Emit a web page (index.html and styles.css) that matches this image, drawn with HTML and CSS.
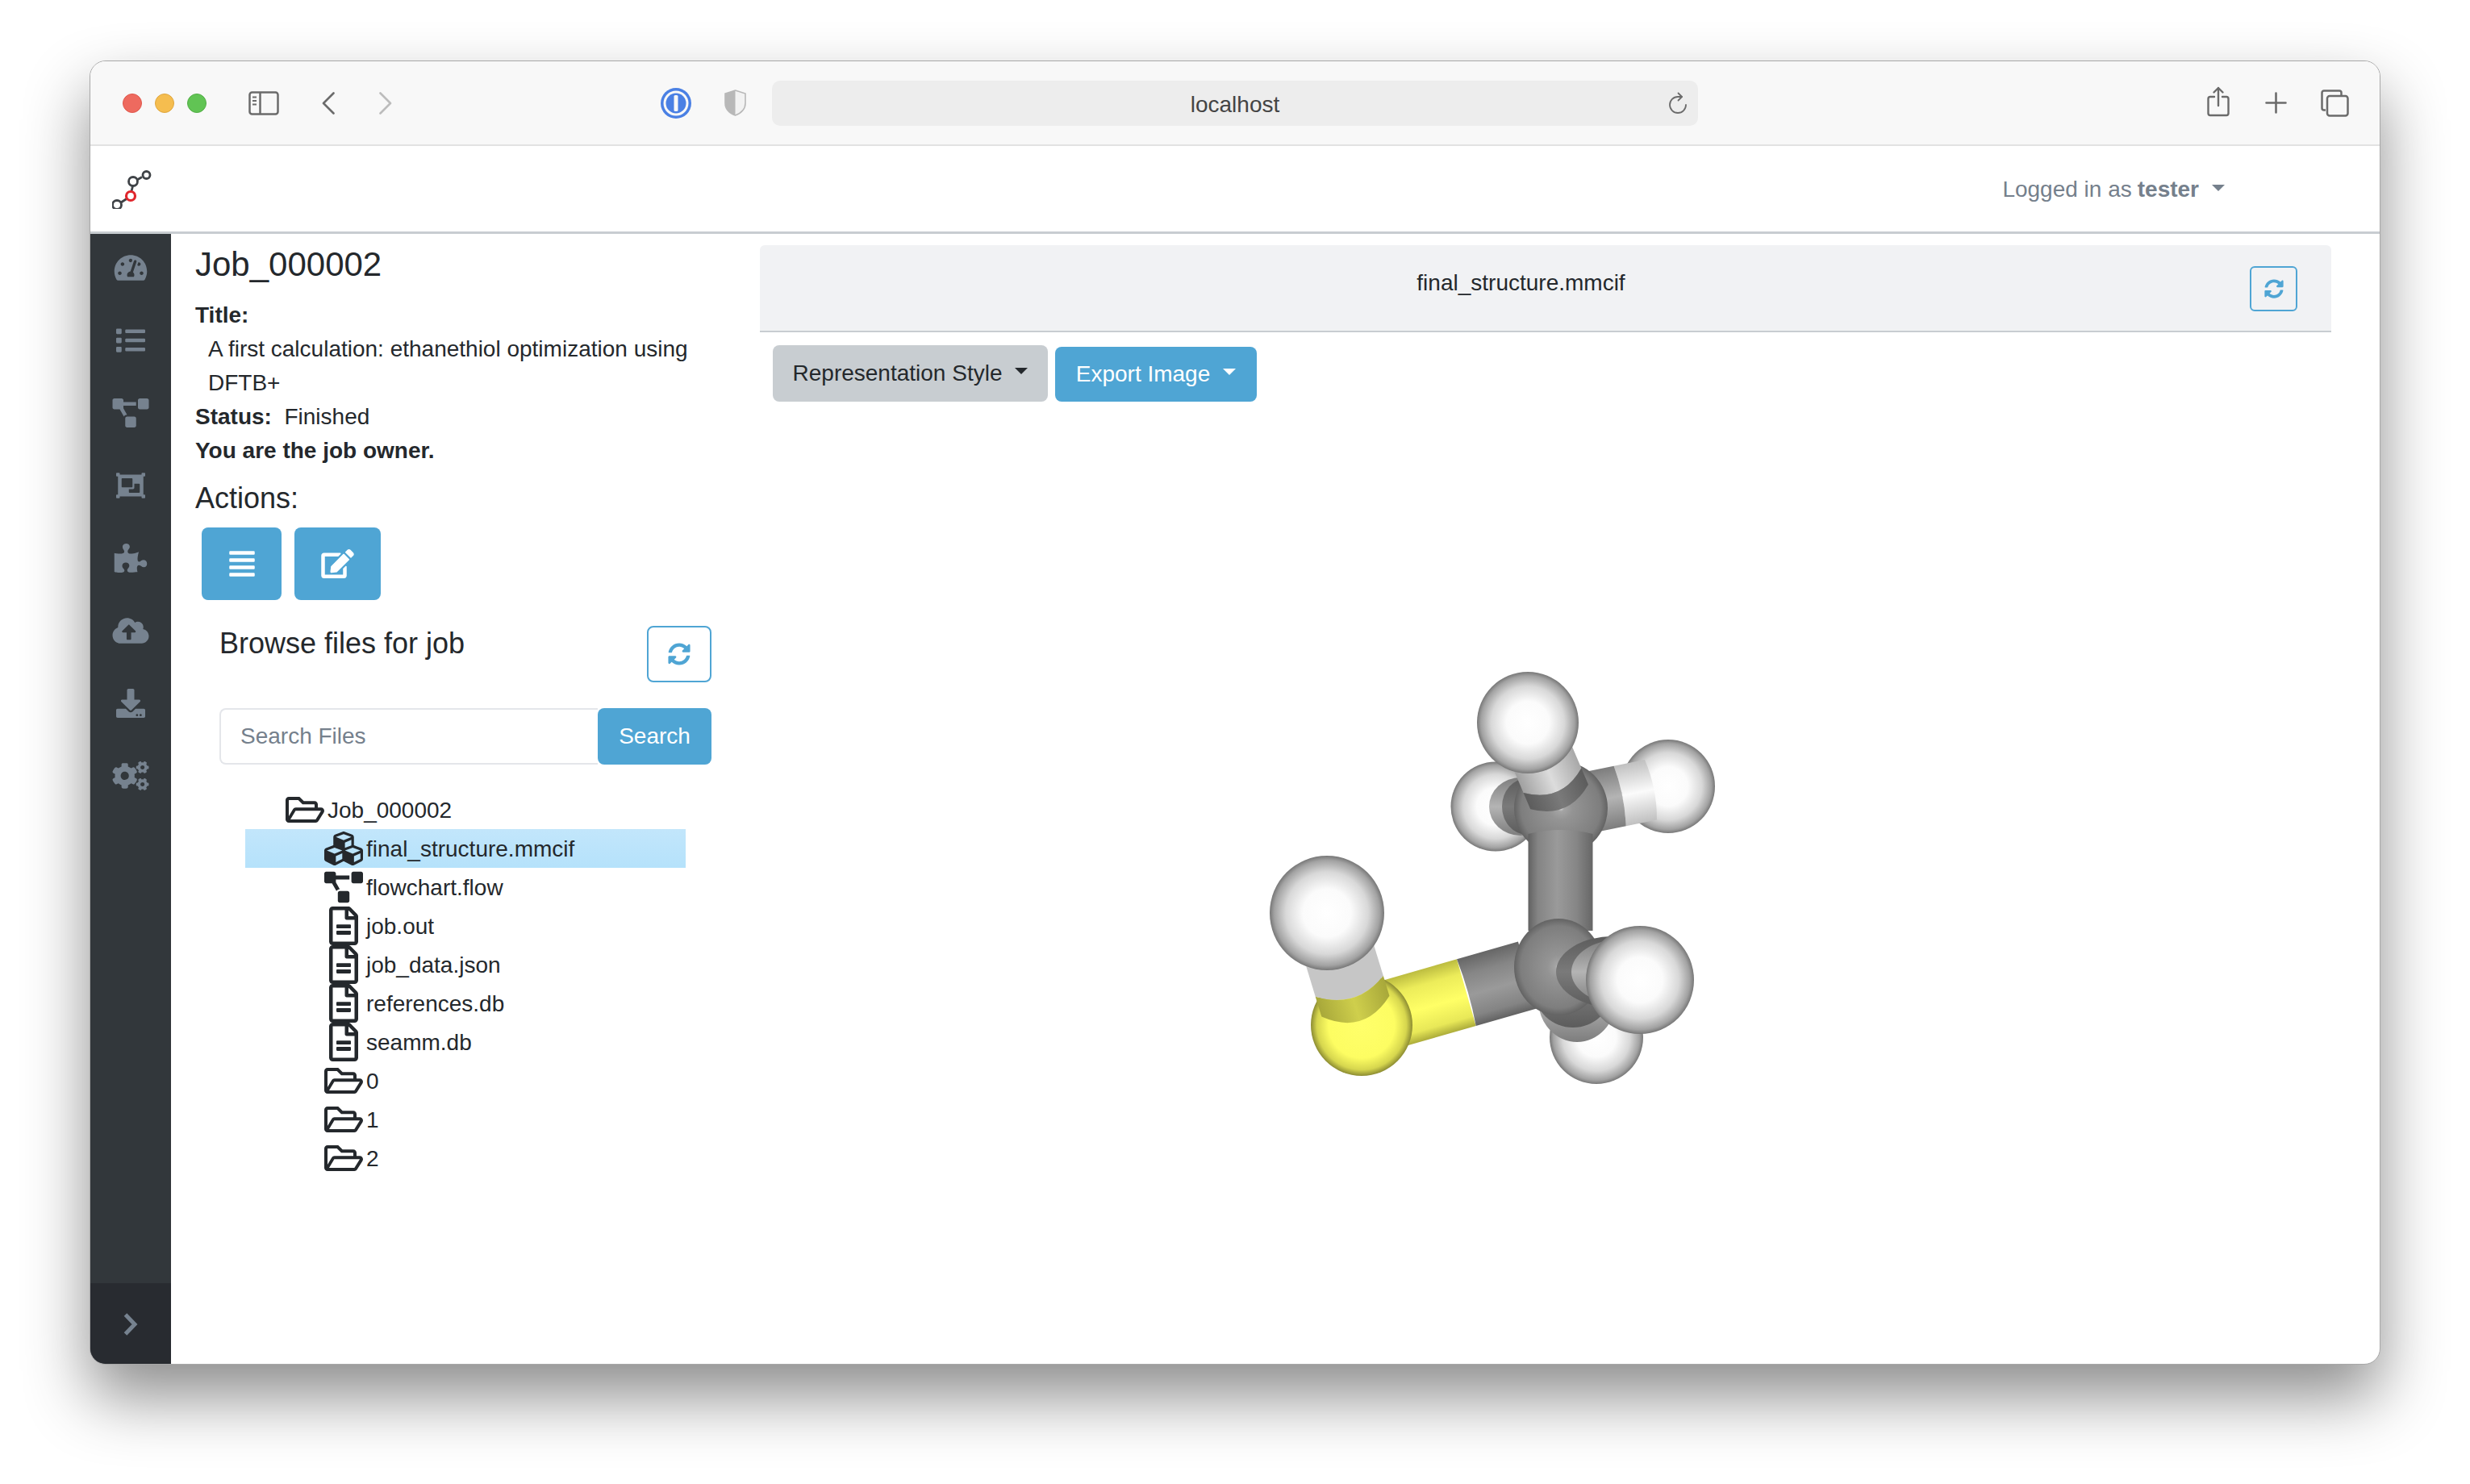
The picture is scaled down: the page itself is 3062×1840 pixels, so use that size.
FILE: index.html
```html
<!DOCTYPE html>
<html>
<head>
  <title>Job_000002</title>
  <link rel="stylesheet" href="styles.css">
</head>
<body>
  <svg class="icon-defs" xmlns="http://www.w3.org/2000/svg">
    <symbol id="i-gauge" viewBox="0 0 576 512"><path d="M288 32C128.94 32 0 160.94 0 320c0 52.8 14.25 102.26 39.06 144.8 5.61 9.62 16.3 15.2 27.44 15.2h443c11.14 0 21.83-5.58 27.44-15.2C561.75 422.26 576 372.8 576 320c0-159.06-128.94-288-288-288zm0 64c14.71 0 26.58 10.13 30.32 23.65-1.11 2.26-2.64 4.23-3.45 6.67l-9.22 27.67c-5.13 3.49-10.97 6.01-17.64 6.01-17.67 0-32-14.33-32-32S270.33 96 288 96zM96 384c-17.67 0-32-14.33-32-32s14.33-32 32-32 32 14.33 32 32-14.33 32-32 32zm48-160c-17.67 0-32-14.33-32-32s14.33-32 32-32 32 14.33 32 32-14.33 32-32 32zm246.77-72.41l-61.33 184C343.13 347.33 352 364.54 352 384c0 11.72-3.38 22.55-8.88 32H232.88c-5.5-9.45-8.88-20.28-8.88-32 0-33.94 26.5-61.43 59.9-63.59l61.34-184.01c4.17-12.56 17.73-19.45 30.36-15.17 12.57 4.19 19.35 17.79 15.17 30.36zm14.66 57.2l15.52-46.55c3.47-1.29 7.13-2.23 11.05-2.23 17.67 0 32 14.33 32 32s-14.33 32-32 32c-11.38-.01-20.89-6.28-26.57-15.22zM480 384c-17.67 0-32-14.33-32-32s14.33-32 32-32 32 14.33 32 32-14.33 32-32 32z"/></symbol>
    <symbol id="i-list" viewBox="0 0 512 512"><path d="M80 368H16a16 16 0 0 0-16 16v64a16 16 0 0 0 16 16h64a16 16 0 0 0 16-16v-64a16 16 0 0 0-16-16zm0-320H16A16 16 0 0 0 0 64v64a16 16 0 0 0 16 16h64a16 16 0 0 0 16-16V64a16 16 0 0 0-16-16zm0 160H16a16 16 0 0 0-16 16v64a16 16 0 0 0 16 16h64a16 16 0 0 0 16-16v-64a16 16 0 0 0-16-16zm416 176H176a16 16 0 0 0-16 16v32a16 16 0 0 0 16 16h320a16 16 0 0 0 16-16v-32a16 16 0 0 0-16-16zm0-320H176a16 16 0 0 0-16 16v32a16 16 0 0 0 16 16h320a16 16 0 0 0 16-16V80a16 16 0 0 0-16-16zm0 160H176a16 16 0 0 0-16 16v32a16 16 0 0 0 16 16h320a16 16 0 0 0 16-16v-32a16 16 0 0 0-16-16z"/></symbol>
    <symbol id="i-flow" viewBox="0 0 640 512"><path d="M384 320H256c-17.67 0-32 14.33-32 32v128c0 17.67 14.33 32 32 32h128c17.67 0 32-14.33 32-32V352c0-17.67-14.33-32-32-32zM192 32c0-17.67-14.33-32-32-32H32C14.33 0 0 14.33 0 32v128c0 17.67 14.33 32 32 32h95.72l73.16 128.04C211.98 300.98 232.4 288 256 288h.28L192 175.51V128h224V64H192V32zM608 0H480c-17.67 0-32 14.33-32 32v128c0 17.67 14.33 32 32 32h128c17.67 0 32-14.33 32-32V32c0-17.67-14.33-32-32-32z"/></symbol>
    <symbol id="i-group" viewBox="0 0 512 512"><path d="M480 128V96h20c6.627 0 12-5.373 12-12V44c0-6.627-5.373-12-12-12h-40c-6.627 0-12 5.373-12 12v20H64V44c0-6.627-5.373-12-12-12H12C5.373 32 0 37.373 0 44v40c0 6.627 5.373 12 12 12h20v320H12c-6.627 0-12 5.373-12 12v40c0 6.627 5.373 12 12 12h40c6.627 0 12-5.373 12-12v-20h384v20c0 6.627 5.373 12 12 12h40c6.627 0 12-5.373 12-12v-40c0-6.627-5.373-12-12-12h-20V128zM96 276V140c0-6.627 5.373-12 12-12h168c6.627 0 12 5.373 12 12v136c0 6.627-5.373 12-12 12H108c-6.627 0-12-5.373-12-12zm320 96c0 6.627-5.373 12-12 12H236c-6.627 0-12-5.373-12-12v-52h72c13.255 0 24-10.745 24-24v-72h84c6.627 0 12 5.373 12 12v136z"/></symbol>
    <symbol id="i-puzzle" viewBox="0 0 576 512"><path d="M519.442 288.651c-41.519 0-59.5 31.593-82.058 31.593C377.409 320.244 432 144 432 144s-196.288 80-196.288-3.297c0-35.827 36.288-46.25 36.288-85.985C272 19.216 243.885 0 210.539 0c-34.654 0-66.366 18.891-66.366 56.346 0 41.364 31.711 59.277 31.711 81.75C175.885 207.719 0 166.758 0 166.758v333.237s178.635 41.047 178.635-28.662c0-22.473-40-40.107-40-81.471 0-37.456 29.25-56.346 63.577-56.346 33.673 0 61.788 19.216 61.788 54.717 0 39.735-36.288 50.158-36.288 85.985 0 60.803 129.675 25.73 181.23 25.73 0 0-34.725-120.101 25.827-120.101 35.962 0 46.423 36.152 86.308 36.152C556.712 416 576 387.99 576 354.443c0-34.199-18.962-65.792-56.558-65.792z"/></symbol>
    <symbol id="i-cloud" viewBox="0 0 640 512"><path d="M537.6 226.6c4.1-10.7 6.4-22.4 6.4-34.6 0-53-43-96-96-96-19.7 0-38.1 6-53.3 16.2C367 64.2 315.3 32 256 32c-88.4 0-160 71.6-160 160 0 2.7.1 5.4.2 8.1C40.2 219.8 0 273.2 0 336c0 79.5 64.5 144 144 144h368c70.7 0 128-57.3 128-128 0-61.9-44-113.6-102.4-125.4zM393.4 288H328v112c0 8.8-7.2 16-16 16h-48c-8.8 0-16-7.2-16-16V288h-65.4c-14.3 0-21.4-17.2-11.3-27.3l105.4-105.4c6.2-6.2 16.4-6.2 22.6 0l105.4 105.4c10.1 10.1 3 27.3-11.3 27.3z"/></symbol>
    <symbol id="i-download" viewBox="0 0 512 512"><path d="M216 0h80c13.3 0 24 10.7 24 24v168h87.7c17.8 0 26.7 21.5 14.1 34.1L269.7 378.3c-7.5 7.5-19.8 7.5-27.3 0L90.1 226.1c-12.6-12.6-3.7-34.1 14.1-34.1H192V24c0-13.3 10.7-24 24-24zm296 376v112c0 13.3-10.7 24-24 24H24c-13.3 0-24-10.7-24-24V376c0-13.3 10.7-24 24-24h146.7l49 49c20.1 20.1 52.5 20.1 72.6 0l49-49H488c13.3 0 24 10.7 24 24zm-124 88c0-11-9-20-20-20s-20 9-20 20 9 20 20 20 20-9 20-20zm64 0c0-11-9-20-20-20s-20 9-20 20 9 20 20 20 20-9 20-20z"/></symbol>
    <symbol id="i-cogs" viewBox="0 0 640 512"><path d="M512.1 191l-8.2 14.3c-3 5.3-9.4 7.5-15.1 5.4-11.8-4.4-22.6-10.7-32.1-18.6-4.6-3.8-5.8-10.5-2.8-15.7l8.2-14.3c-6.9-8-12.3-17.3-15.9-27.4h-16.5c-6 0-11.2-4.3-12.2-10.3-2-12-2.1-24.6 0-37.1 1-6 6.2-10.4 12.2-10.4h16.5c3.6-10.1 9-19.4 15.9-27.4l-8.2-14.3c-3-5.2-1.9-11.9 2.8-15.7 9.5-7.9 20.4-14.2 32.1-18.6 5.7-2.1 12.1.1 15.1 5.4l8.2 14.3c10.5-1.9 21.2-1.9 31.7 0L552 6.3c3-5.3 9.4-7.5 15.1-5.4 11.8 4.4 22.6 10.7 32.1 18.6 4.6 3.8 5.8 10.5 2.8 15.7l-8.2 14.3c6.9 8 12.3 17.3 15.9 27.4h16.5c6 0 11.2 4.3 12.2 10.3 2 12 2.1 24.6 0 37.1-1 6-6.2 10.4-12.2 10.4h-16.5c-3.6 10.1-9 19.4-15.9 27.4l8.2 14.3c3 5.2 1.9 11.9-2.8 15.7-9.5 7.9-20.4 14.2-32.1 18.6-5.7 2.1-12.1-.1-15.1-5.4l-8.2-14.3c-10.4 1.9-21.2 1.9-31.7 0zm-10.5-58.8c38.5 29.6 82.4-14.3 52.8-52.8-38.5-29.7-82.4 14.3-52.8 52.8zM386.3 286.1l33.7 16.8c10.1 5.8 14.5 18.1 10.5 29.1-8.9 24.2-26.4 46.4-42.6 65.8-7.4 8.9-20.2 11.1-30.3 5.3l-29.1-16.8c-16 13.7-34.6 24.6-54.9 31.7v33.6c0 11.6-8.3 21.6-19.7 23.6-24.6 4.2-50.4 4.4-75.9 0-11.5-2-20-11.9-20-23.6V418c-20.3-7.2-38.9-18-54.9-31.7L74 403c-10 5.8-22.9 3.6-30.3-5.3-16.2-19.4-33.3-41.6-42.2-65.7-4-10.9.4-23.2 10.5-29.1l33.3-16.8c-3.9-20.9-3.9-42.4 0-63.4L12 205.8c-10.1-5.8-14.6-18.1-10.5-29 8.9-24.2 26-46.4 42.2-65.8 7.4-8.9 20.2-11.1 30.3-5.3l29.1 16.8c16-13.7 34.6-24.6 54.9-31.7V57.1c0-11.5 8.2-21.5 19.6-23.5 24.6-4.2 50.5-4.4 76-.1 11.5 2 20 11.9 20 23.6v33.6c20.3 7.2 38.9 18 54.9 31.7l29.1-16.8c10-5.8 22.9-3.6 30.3 5.3 16.2 19.4 33.2 41.6 42.1 65.8 4 10.9.1 23.2-10 29.1l-33.7 16.8c3.9 21 3.9 42.5 0 63.5zm-117.6 21.1c59.2-77-28.7-164.9-105.7-105.7-59.2 77 28.7 164.9 105.7 105.7zm243.4 182.7l-8.2 14.3c-3 5.3-9.4 7.5-15.1 5.4-11.8-4.4-22.6-10.7-32.1-18.6-4.6-3.8-5.8-10.5-2.8-15.7l8.2-14.3c-6.9-8-12.3-17.3-15.9-27.4h-16.5c-6 0-11.2-4.3-12.2-10.3-2-12-2.1-24.6 0-37.1 1-6 6.2-10.4 12.2-10.4h16.5c3.6-10.1 9-19.4 15.9-27.4l-8.2-14.3c-3-5.2-1.9-11.9 2.8-15.7 9.5-7.9 20.4-14.2 32.1-18.6 5.7-2.1 12.1.1 15.1 5.4l8.2 14.3c10.5-1.9 21.2-1.9 31.7 0l8.2-14.3c3-5.3 9.4-7.5 15.1-5.4 11.8 4.4 22.6 10.7 32.1 18.6 4.6 3.8 5.8 10.5 2.8 15.7l-8.2 14.3c6.9 8 12.3 17.3 15.9 27.4h16.5c6 0 11.2 4.3 12.2 10.3 2 12 2.1 24.6 0 37.1-1 6-6.2 10.4-12.2 10.4h-16.5c-3.6 10.1-9 19.4-15.9 27.4l8.2 14.3c3 5.2 1.9 11.9-2.8 15.7-9.5 7.9-20.4 14.2-32.1 18.6-5.7 2.1-12.1-.1-15.1-5.4l-8.2-14.3c-10.4 1.9-21.2 1.9-31.7 0zM501.6 431c38.5 29.6 82.4-14.3 52.8-52.8-38.5-29.6-82.4 14.3-52.8 52.8z"/></symbol>
    <symbol id="i-sync" viewBox="0 0 512 512"><path d="M370.72 133.28C339.458 104.008 298.888 87.962 255.848 88c-77.458.068-144.328 53.178-162.791 126.85-1.344 5.363-6.122 9.15-11.651 9.15H24.103c-7.498 0-13.194-6.807-11.807-14.176C33.933 94.924 134.813 8 256 8c66.448 0 126.791 26.136 171.315 68.685L463.03 40.97C478.149 25.851 504 36.559 504 57.941V192c0 13.255-10.745 24-24 24H345.941c-21.382 0-32.09-25.851-16.971-40.971l41.75-41.749zM32 296h134.059c21.382 0 32.09 25.851 16.971 40.971l-41.75 41.75c31.262 29.273 71.835 45.319 114.876 45.28 77.418-.07 144.315-53.144 162.787-126.849 1.344-5.363 6.122-9.15 11.651-9.15h57.304c7.498 0 13.194 6.807 11.807 14.176C478.067 417.076 377.187 504 256 504c-66.448 0-126.791-26.136-171.315-68.685L48.97 471.03C33.851 486.149 8 475.441 8 454.059V320c0-13.255 10.745-24 24-24z"/></symbol>
    <symbol id="i-lines" viewBox="0 0 448 512"><path d="M432 416H16a16 16 0 0 0-16 16v32a16 16 0 0 0 16 16h416a16 16 0 0 0 16-16v-32a16 16 0 0 0-16-16zm0-128H16a16 16 0 0 0-16 16v32a16 16 0 0 0 16 16h416a16 16 0 0 0 16-16v-32a16 16 0 0 0-16-16zm0-128H16a16 16 0 0 0-16 16v32a16 16 0 0 0 16 16h416a16 16 0 0 0 16-16v-32a16 16 0 0 0-16-16zm0-128H16a16 16 0 0 0-16 16v32a16 16 0 0 0 16 16h416a16 16 0 0 0 16-16V48a16 16 0 0 0-16-16z"/></symbol>
    <symbol id="i-edit" viewBox="0 0 576 512"><path d="M402.6 83.2l90.2 90.2c3.8 3.8 3.8 10 0 13.8L274.4 405.6l-92.8 10.3c-12.4 1.4-22.9-9.1-21.5-21.5l10.3-92.8L388.8 83.2c3.8-3.8 10-3.8 13.8 0zm162-22.9l-48.8-48.8c-15.2-15.2-39.9-15.2-55.2 0l-35.4 35.4c-3.8 3.8-3.8 10 0 13.8l90.2 90.2c3.8 3.8 10 3.8 13.8 0l35.4-35.4c15.2-15.3 15.2-40 0-55.2zM384 346.2V448H64V128h229.8c3.2 0 6.2-1.3 8.5-3.5l40-40c7.6-7.6 2.2-20.5-8.5-20.5H48C21.5 64 0 85.5 0 112v352c0 26.5 21.5 48 48 48h352c26.5 0 48-21.5 48-48V306.2c0-10.7-12.9-16-20.5-8.5l-40 40c-2.2 2.3-3.5 5.3-3.5 8.5z"/></symbol>
    <symbol id="i-folder" viewBox="0 0 576 512"><path d="M527.9 224H480v-48c0-26.5-21.5-48-48-48H272l-64-64H48C21.5 64 0 85.5 0 112v288c0 26.5 21.5 48 48 48h400c16.5 0 31.9-8.5 40.7-22.6l79.9-128c20-31.9-3-73.4-40.7-73.4zM48 118c0-3.3 2.7-6 6-6h134.1l64 64H426c3.3 0 6 2.7 6 6v42H152c-16.8 0-32.4 8.8-41.1 23.2L48 351.4zm400 282H72l77.2-128H528z"/></symbol>
    <symbol id="i-file" viewBox="0 0 384 512"><path d="M288 248v28c0 6.6-5.4 12-12 12H108c-6.6 0-12-5.4-12-12v-28c0-6.6 5.4-12 12-12h168c6.6 0 12 5.4 12 12zm-12 72H108c-6.6 0-12 5.4-12 12v28c0 6.6 5.4 12 12 12h168c6.6 0 12-5.4 12-12v-28c0-6.6-5.4-12-12-12zm108-188.1V464c0 26.5-21.5 48-48 48H48c-26.5 0-48-21.5-48-48V48C0 21.5 21.5 0 48 0h204.1C264.8 0 277 5.1 286 14.1L369.9 98c9 8.9 14.1 21.2 14.1 33.9zm-128-80V128h76.1L256 51.9zM336 464V176H232c-13.3 0-24-10.7-24-24V48H48v416h288z"/></symbol>
    <symbol id="i-cubes" viewBox="0 0 512 512"><path d="M488.6 250.2L392 214V105.5c0-15-9.3-28.4-23.4-33.7l-100-37.5c-8.1-3.1-17.1-3.1-25.3 0l-100 37.5c-14.1 5.3-23.4 18.7-23.4 33.7V214l-96.6 36.2C9.3 255.5 0 268.9 0 283.9V394c0 13.6 7.7 26.1 19.9 32.2l100 50c10.1 5.1 22.1 5.1 32.2 0l103.9-52 103.9 52c10.1 5.1 22.1 5.1 32.2 0l100-50c12.2-6.1 19.9-18.6 19.9-32.2V283.9c0-15-9.3-28.4-23.4-33.7zM358 214.8l-85 31.9v-68.2l85-37v73.3zM154 104.1l102-38.2 102 38.2v.6l-102 41.4-102-41.4v-.6zm84 291.1l-85 42.5v-79.1l85-38.8v75.4zm0-112l-102 41.4-102-41.4v-.6l102-38.2 102 38.2v.6zm240 112l-85 42.5v-79.1l85-38.8v75.4zm0-112l-102 41.4-102-41.4v-.6l102-38.2 102 38.2v.6z"/></symbol>
  </svg>

  <div class="window">
    <div class="toolbar">
      <div class="lights">
        <span class="light light-red"></span>
        <span class="light light-yellow"></span>
        <span class="light light-green"></span>
      </div>
      <svg class="tb-sidebar" viewBox="0 0 38 30" fill="none" stroke="#6b6b6b" stroke-width="2.5">
        <rect x="1.5" y="1.5" width="35" height="27" rx="3"/>
        <path d="M14.5 1.5v27"/>
        <path d="M5 7.5h5M5 12h5M5 16.5h5" stroke-width="1.8"/>
      </svg>
      <svg class="tb-back" viewBox="0 0 16 28" fill="none" stroke="#6b6b6b" stroke-width="2.6" stroke-linecap="round" stroke-linejoin="round"><path d="M14.5 1.5L2 14l12.5 12.5"/></svg>
      <svg class="tb-forward" viewBox="0 0 16 28" fill="none" stroke="#bcbcbc" stroke-width="2.6" stroke-linecap="round" stroke-linejoin="round"><path d="M1.5 1.5L14 14 1.5 26.5"/></svg>
      <svg class="tb-onepass" viewBox="0 0 38 38">
        <circle cx="19" cy="19" r="19" fill="#4a80e4"/>
        <circle cx="19" cy="19" r="15.5" fill="#f8f8f8"/>
        <circle cx="19" cy="19" r="12.5" fill="#4a80e4"/>
        <rect x="16.5" y="9" width="5" height="20" rx="1.5" fill="#f8f8f8"/>
      </svg>
      <svg class="tb-shield" viewBox="0 0 27 33">
        <path d="M13.5 1L26 5v12c0 8-6 12.500-12.500 15C7 29.500 1 25 1 17V5z" fill="#f2f2f2" stroke="#b8b8b8" stroke-width="1.6"/>
        <path d="M13.500 1L1 5v12c0 8 6 12.500 12.500 15z" fill="#b8b8b8"/>
      </svg>
      <div class="urlbar">
        <span class="url-text">localhost</span>
        <svg class="url-reload" viewBox="0 0 24 28" fill="none" stroke="#6b6b6b" stroke-width="1.8" stroke-linecap="round" stroke-linejoin="round">
          <path d="M17 6H12A10 10 0 1 0 22 16"/>
          <path d="M12.500 1.500L17 6l-4.500 4.500"/>
        </svg>
      </div>
      <svg class="tb-share" viewBox="0 0 28 38" fill="none" stroke="#6b6b6b" stroke-width="2.4" stroke-linecap="round" stroke-linejoin="round">
        <path d="M9 13H4a2.500 2.500 0 0 0-2.500 2.500v18A2.500 2.500 0 0 0 4 36h20a2.500 2.500 0 0 0 2.500-2.500v-18A2.500 2.500 0 0 0 24 13h-5"/>
        <path d="M14 24V2M8.500 7.500L14 2l5.500 5.500"/>
      </svg>
      <svg class="tb-plus" viewBox="0 0 27 27" fill="none" stroke="#6b6b6b" stroke-width="2.6" stroke-linecap="round"><path d="M13.500 1.500v24M1.500 13.500h24"/></svg>
      <svg class="tb-tabs" viewBox="0 0 35 34" fill="none" stroke="#6b6b6b" stroke-width="2.500">
        <path d="M6 25.500H4a2.500 2.500 0 0 1-2.500-2.500V4A2.500 2.500 0 0 1 4 1.500h19A2.500 2.500 0 0 1 25.500 4v4"/>
        <rect x="8" y="8" width="25.500" height="24.500" rx="3"/>
      </svg>
    </div>

    <div class="navbar">
      <svg class="logo" viewBox="0 0 50 50" fill="none" stroke="#3f4347" stroke-width="2.800">
        <path d="M11 42l7-4.500M24 28l1.500-6M31 14l6-3.500"/>
        <circle cx="6" cy="45" r="5.500"/>
        <circle cx="26" cy="16" r="5.500"/>
        <circle cx="42.500" cy="8" r="4.500"/>
        <circle cx="23" cy="34" r="5.500" stroke="#e0262c" stroke-width="3.200"/>
      </svg>
      <div class="user-menu">Logged in as <b>tester</b><span class="caret caret-grey"></span></div>
    </div>

    <div class="main">
      <nav class="sidebar">
        <div class="side-items">
          <div class="side-item"><svg class="side-icon"><use href="#i-gauge"/></svg></div>
          <div class="side-item"><svg class="side-icon"><use href="#i-list"/></svg></div>
          <div class="side-item"><svg class="side-icon"><use href="#i-flow"/></svg></div>
          <div class="side-item"><svg class="side-icon"><use href="#i-group"/></svg></div>
          <div class="side-item"><svg class="side-icon"><use href="#i-puzzle"/></svg></div>
          <div class="side-item"><svg class="side-icon"><use href="#i-cloud"/></svg></div>
          <div class="side-item"><svg class="side-icon"><use href="#i-download"/></svg></div>
          <div class="side-item"><svg class="side-icon"><use href="#i-cogs"/></svg></div>
        </div>
        <div class="side-toggle">
          <svg class="side-chevron" viewBox="0 0 18 28" fill="none" stroke="#76828f" stroke-width="5"><path d="M2.500 2L14 14 2.500 26"/></svg>
        </div>
      </nav>

      <section class="job-panel">
        <h4 class="job-name">Job_000002</h4>
        <div class="job-info">
          <div><b>Title:</b></div>
          <div class="job-title">A first calculation: ethanethiol optimization using DFTB+</div>
          <div><b>Status:</b>&nbsp; Finished</div>
          <div><b>You are the job owner.</b></div>
        </div>
        <h5 class="actions-title">Actions:</h5>
        <div class="actions">
          <button class="btn btn-blue btn-lines"><svg class="action-icon-lines"><use href="#i-lines"/></svg></button>
          <button class="btn btn-blue btn-edit"><svg class="action-icon-edit"><use href="#i-edit"/></svg></button>
        </div>

        <div class="browse">
          <div class="browse-head">
            <h5 class="browse-title">Browse files for job</h5>
            <button class="btn btn-outline btn-refresh"><svg class="refresh-icon"><use href="#i-sync"/></svg></button>
          </div>
          <div class="search">
            <input class="search-input" type="text" placeholder="Search Files">
            <button class="btn btn-blue search-btn">Search</button>
          </div>
          <ul class="tree">
            <li class="tree-row tree-root"><svg class="tree-icon"><use href="#i-folder"/></svg>Job_000002</li>
            <li class="tree-row tree-selected"><svg class="tree-icon"><use href="#i-cubes"/></svg>final_structure.mmcif</li>
            <li class="tree-row"><svg class="tree-icon"><use href="#i-flow"/></svg>flowchart.flow</li>
            <li class="tree-row"><svg class="tree-icon"><use href="#i-file"/></svg>job.out</li>
            <li class="tree-row"><svg class="tree-icon"><use href="#i-file"/></svg>job_data.json</li>
            <li class="tree-row"><svg class="tree-icon"><use href="#i-file"/></svg>references.db</li>
            <li class="tree-row"><svg class="tree-icon"><use href="#i-file"/></svg>seamm.db</li>
            <li class="tree-row"><svg class="tree-icon"><use href="#i-folder"/></svg>0</li>
            <li class="tree-row"><svg class="tree-icon"><use href="#i-folder"/></svg>1</li>
            <li class="tree-row"><svg class="tree-icon"><use href="#i-folder"/></svg>2</li>
          </ul>
        </div>
      </section>

      <section class="viewer">
        <div class="viewer-head">
          <span class="viewer-name">final_structure.mmcif</span>
          <button class="btn btn-outline btn-refresh-small"><svg class="refresh-icon-small"><use href="#i-sync"/></svg></button>
        </div>
        <div class="viewer-tools">
          <button class="btn btn-grey tool-style">Representation Style<span class="caret caret-dark"></span></button>
          <button class="btn btn-blue tool-export">Export Image<span class="caret caret-white"></span></button>
        </div>

        <svg class="molecule" viewBox="942 504 1948 1180">
          <defs>
            <radialGradient id="ball-h"><stop offset="0" stop-color="#fff"/><stop offset=".42" stop-color="#fbfbfb"/><stop offset=".72" stop-color="#d8d8d8"/><stop offset=".92" stop-color="#a2a2a2"/><stop offset="1" stop-color="#777"/></radialGradient>
            <radialGradient id="ball-c"><stop offset="0" stop-color="#dcdcdc"/><stop offset=".07" stop-color="#a4a4a4"/><stop offset=".25" stop-color="#949494"/><stop offset=".85" stop-color="#7e7e7e"/><stop offset="1" stop-color="#636363"/></radialGradient>
            <radialGradient id="ball-s"><stop offset="0" stop-color="#ffff6a"/><stop offset=".65" stop-color="#fdfd62"/><stop offset=".88" stop-color="#d6d64e"/><stop offset="1" stop-color="#8c8c32"/></radialGradient>
            <linearGradient id="bond-c" x1="0" y1="0" x2="0" y2="1"><stop offset="0" stop-color="#666"/><stop offset=".25" stop-color="#868686"/><stop offset=".55" stop-color="#9a9a9a"/><stop offset=".85" stop-color="#848484"/><stop offset="1" stop-color="#626262"/></linearGradient>
            <linearGradient id="bond-dark" x1="0" y1="0" x2="0" y2="1"><stop offset="0" stop-color="#5c5c5c"/><stop offset=".5" stop-color="#7a7a7a"/><stop offset="1" stop-color="#5c5c5c"/></linearGradient>
            <linearGradient id="bond-mid" x1="0" y1="0" x2="0" y2="1"><stop offset="0" stop-color="#7d7d7d"/><stop offset=".5" stop-color="#b4b4b4"/><stop offset="1" stop-color="#7d7d7d"/></linearGradient>
            <linearGradient id="bond-h" x1="0" y1="0" x2="0" y2="1"><stop offset="0" stop-color="#a8a8a8"/><stop offset=".5" stop-color="#dcdcdc"/><stop offset="1" stop-color="#a0a0a0"/></linearGradient>
            <linearGradient id="bond-h-bright" x1="0" y1="0" x2="0" y2="1"><stop offset="0" stop-color="#c0c0c0"/><stop offset=".5" stop-color="#fbfbfb"/><stop offset="1" stop-color="#c0c0c0"/></linearGradient>
            <linearGradient id="bond-s" x1="0" y1="0" x2="0" y2="1"><stop offset="0" stop-color="#bcbc40"/><stop offset=".22" stop-color="#ecec5a"/><stop offset=".55" stop-color="#ffff66"/><stop offset=".85" stop-color="#e8e858"/><stop offset="1" stop-color="#acac3a"/></linearGradient>
            <linearGradient id="bond-s-dark" x1="0" y1="0" x2="0" y2="1"><stop offset="0" stop-color="#a8a83a"/><stop offset=".5" stop-color="#cfcf4c"/><stop offset="1" stop-color="#a8a83a"/></linearGradient>
          </defs>

          <!-- back hydrogen, left -->
          <circle cx="1854" cy="1000" r="55.500" fill="url(#ball-h)"/>
          <ellipse cx="1885" cy="1000" rx="39" ry="36" fill="url(#bond-mid)"/>
          <ellipse cx="1893" cy="1000" rx="31" ry="35" fill="url(#bond-dark)"/>

          <!-- right hydrogen -->
          <circle cx="2068" cy="975" r="58" fill="url(#ball-h)"/>
          <g transform="translate(2068 975) rotate(168.600)">
            <path d="M22 -38Q14 0 22 38L61 38Q55 0 61 -38Z" fill="url(#bond-h-bright)"/>
            <path d="M61 -38Q55 0 61 38L105 38L105 -38Z" fill="url(#bond-mid)"/>
          </g>

          <!-- upper carbon -->
          <circle cx="1935" cy="1002" r="58" fill="url(#ball-c)"/>

          <!-- top hydrogen -->
          <g transform="translate(1894 896) rotate(67)">
            <path d="M30 -39L78 -39Q108 0 78 39L30 39Z" fill="url(#bond-h)"/>
            <path d="M78 -39Q108 0 78 39L100 39Q130 0 100 -39Z" fill="url(#bond-dark)"/>
          </g>
          <circle cx="1894" cy="896" r="63" fill="url(#ball-h)"/>

          <!-- carbon carbon bond -->
          <g transform="translate(1934.500 1034) rotate(90)">
            <path d="M0 -40Q-10 0 0 40L120 40L120 -40Z" fill="url(#bond-c)"/>
          </g>

          <!-- bottom hydrogen -->
          <circle cx="1979" cy="1286" r="58" fill="url(#ball-h)"/>
          <ellipse cx="1955" cy="1240" rx="48" ry="52" fill="url(#bond-mid)"/>
          <ellipse cx="1950" cy="1228" rx="48" ry="46" fill="url(#bond-dark)"/>

          <!-- carbon sulfur bond -->
          <g transform="translate(1740 1253) rotate(-16)">
            <path d="M-30 -43L81 -43L81 43L-30 43Z" fill="url(#bond-s)"/>
            <path d="M81 -43Q85 0 81 43L160 43L160 -43Z" fill="url(#bond-c)"/>
          </g>

          <!-- lower carbon -->
          <ellipse cx="1932" cy="1199" rx="55" ry="60" fill="url(#ball-c)"/>

          <!-- front hydrogen -->
          <ellipse cx="2000" cy="1205" rx="71" ry="44" fill="url(#bond-dark)"/>
          <ellipse cx="2008" cy="1205" rx="60" ry="40" fill="url(#bond-mid)"/>
          <circle cx="2033" cy="1215" r="67" fill="url(#ball-h)"/>

          <!-- sulfur and its hydrogen -->
          <circle cx="1688" cy="1271" r="63" fill="url(#ball-s)"/>
          <g transform="translate(1645 1132) rotate(73)">
            <path d="M40 -44L95 -44Q125 0 95 44L40 44Z" fill="#c6c6c6"/>
            <path d="M95 -44Q125 0 95 44L121 44Q159 0 121 -44Z" fill="url(#bond-s-dark)"/>
          </g>
          <circle cx="1645" cy="1132" r="71" fill="url(#ball-h)"/>
        </svg>
      </section>
    </div>
  </div>
</body>
</html>
```

FILE: styles.css
```css
* {
  box-sizing: border-box;
}

html {
  height: 100%;
}

body {
  min-height: 100%;
  margin: 0;
  padding: 75px 0 0 111px;
  background-color: #fff;
  color: #24282c;
  font-family: "Liberation Sans", Arial, sans-serif;
  font-size: 28px;
  line-height: 42px;
}

.icon-defs {
  display: none;
}

/* browser window */
.window {
  display: flex;
  flex-direction: column;
  width: 2840px;
  height: 1617px;
  border: 1px solid #a8a8a8;
  border-radius: 20px;
  background-color: #fff;
  box-shadow: 0 40px 80px rgba(0, 0, 0, 0.45);
  overflow: hidden;
}

.toolbar {
  display: flex;
  align-items: center;
  flex: none;
  height: 105px;
  padding-left: 40px;
  background-color: #f8f8f8;
  border-bottom: 2px solid #e2e2e2;
}

.lights {
  display: flex;
  gap: 16px;
}

.light {
  width: 24px;
  height: 24px;
  border-radius: 50%;
}

.light-red {
  background-color: #ee6a5f;
  border: 1px solid #e0564b;
}

.light-yellow {
  background-color: #f5bd4f;
  border: 1px solid #dfa63c;
}

.light-green {
  background-color: #61c454;
  border: 1px solid #52ad46;
}

.tb-sidebar {
  width: 38px;
  height: 30px;
  margin-left: 52px;
}

.tb-back {
  width: 16px;
  height: 28px;
  margin-left: 53px;
}

.tb-forward {
  width: 16px;
  height: 28px;
  margin-left: 55px;
}

.tb-onepass {
  width: 38px;
  height: 38px;
  margin-left: 333px;
}

.tb-shield {
  width: 27px;
  height: 33px;
  margin-left: 41px;
}

.urlbar {
  position: relative;
  width: 1148px;
  height: 56px;
  margin-left: 32px;
  border-radius: 10px;
  background-color: #ededed;
  color: #444;
  text-align: center;
  line-height: 60px;
}

.url-reload {
  position: absolute;
  top: 14px;
  right: 13px;
  width: 24px;
  height: 28px;
}

.tb-share {
  width: 28px;
  height: 38px;
  margin-left: 631px;
  margin-bottom: 4px;
}

.tb-plus {
  width: 27px;
  height: 27px;
  margin-left: 44px;
}

.tb-tabs {
  width: 35px;
  height: 34px;
  margin-left: 42px;
}

/* app navbar */
.navbar {
  display: flex;
  align-items: center;
  justify-content: space-between;
  flex: none;
  height: 109px;
  padding: 0 192px 0 27px;
  border-bottom: 3px solid #c8cdd1;
}

.logo {
  width: 50px;
  height: 50px;
}

.user-menu {
  display: flex;
  align-items: center;
  gap: 7px;
  padding-top: 2px;
  color: #75808c;
}

.caret {
  display: inline-block;
  width: 0;
  height: 0;
  border-style: solid;
  border-width: 8px 8px 0;
  border-color: transparent;
}

.caret-grey {
  margin-left: 9px;
  margin-bottom: 4px;
  border-top-color: #75808c;
}

.caret-dark {
  margin-left: 16px;
  margin-bottom: 6px;
  border-top-color: #24282c;
}

.caret-white {
  margin-left: 16px;
  margin-bottom: 6px;
  border-top-color: #fff;
}

.main {
  display: flex;
  flex: 1;
  min-height: 0;
}

/* sidebar */
.sidebar {
  display: flex;
  flex-direction: column;
  justify-content: space-between;
  flex: none;
  width: 100px;
  background-color: #32373b;
}

.side-items {
  display: flex;
  flex-direction: column;
  gap: 8px;
  padding-top: 1px;
}

.side-item {
  display: flex;
  align-items: center;
  justify-content: center;
  height: 82px;
}

.side-icon {
  width: 46px;
  height: 36px;
  fill: #76828f;
}

.side-toggle {
  display: flex;
  align-items: center;
  justify-content: center;
  height: 100px;
  padding-top: 2px;
  background-color: #282b30;
}

.side-chevron {
  width: 18px;
  height: 28px;
}

/* job panel */
.job-panel {
  flex: none;
  width: 730px;
  padding: 13px 48px 0 30px;
}

.job-name {
  margin: 0 0 17px;
  font-size: 42px;
  font-weight: 400;
  line-height: 50px;
}

.job-title {
  padding-left: 16px;
}

.actions-title {
  margin: 17px 0 15px;
  font-size: 36px;
  font-weight: 400;
  line-height: 42px;
}

.actions {
  display: flex;
  gap: 16px;
  margin-left: 8px;
}

.btn {
  display: flex;
  align-items: center;
  justify-content: center;
  padding: 0;
  border: none;
  border-radius: 8px;
  font-family: inherit;
  font-size: 28px;
}

.btn-blue {
  background-color: #4fa5d4;
  color: #fff;
}

.btn-grey {
  background-color: #c8cdd1;
  color: #24282c;
}

.btn-outline {
  background-color: transparent;
  border: 2px solid #4fa5d4;
}

.btn-lines {
  width: 99px;
  height: 90px;
}

.btn-edit {
  width: 107px;
  height: 90px;
}

.action-icon-lines {
  width: 32px;
  height: 36px;
  fill: #fff;
}

.action-icon-edit {
  width: 41px;
  height: 36px;
  fill: #fff;
}

/* file browser */
.browse {
  width: 610px;
  margin: 32px 0 0 30px;
}

.browse-head {
  display: flex;
  justify-content: space-between;
}

.browse-title {
  margin: 1px 0 0;
  font-size: 36px;
  font-weight: 400;
  line-height: 42px;
}

.btn-refresh {
  width: 80px;
  height: 70px;
}

.refresh-icon {
  width: 28px;
  height: 28px;
  fill: #4fa5d4;
}

.search {
  display: flex;
  height: 70px;
  margin-top: 32px;
}

.search-input {
  flex: 1;
  min-width: 0;
  padding: 0 24px;
  border: 2px solid #e4e6ea;
  border-right: none;
  border-radius: 8px 0 0 8px;
  font-family: inherit;
  font-size: 28px;
}

.search-input::placeholder {
  color: #75808c;
  opacity: 1;
}

.search-btn {
  width: 141px;
}

.tree {
  width: 546px;
  margin: 32px 0 0 32px;
  padding: 0;
  list-style: none;
}

.tree-row {
  display: flex;
  align-items: center;
  height: 48px;
  padding-top: 2px;
  padding-left: 98px;
}

.tree-root {
  padding-left: 50px;
}

.tree-selected {
  background: linear-gradient(#c2e6fb, #b5e2fb);
}

.tree-icon {
  flex: none;
  width: 48px;
  height: 48px;
  margin-top: -2px;
  margin-right: 4px;
  fill: #24282c;
}

/* structure viewer */
.viewer {
  flex: none;
  width: 1948px;
  padding-top: 14px;
}

.viewer-head {
  display: flex;
  align-items: flex-start;
  height: 108px;
  padding: 26px 42px 0 40px;
  border-bottom: 2px solid #c8cdd1;
  border-radius: 6px 6px 0 0;
  background-color: #f1f2f4;
}

.viewer-name {
  flex: 1;
  text-align: center;
}

.btn-refresh-small {
  width: 59px;
  height: 56px;
  border-radius: 6px;
}

.refresh-icon-small {
  width: 24px;
  height: 24px;
  fill: #4fa5d4;
}

.viewer-tools {
  display: flex;
  align-items: flex-end;
  gap: 9px;
  padding: 16px 0 0 16px;
}

.tool-style {
  width: 341px;
  height: 70px;
}

.tool-export {
  width: 250px;
  height: 68px;
}

.molecule {
  display: block;
  width: 1948px;
  height: 1180px;
  margin-top: 6px;
}
```
